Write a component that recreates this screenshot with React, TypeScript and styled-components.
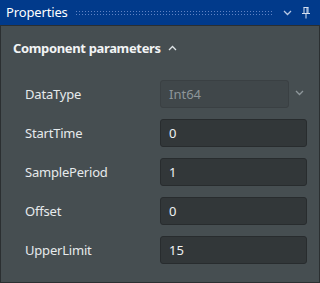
import React from "react";
import styled, { createGlobalStyle } from "styled-components";

const Global = createGlobalStyle`
  html, body { margin: 0; padding: 0; background: #464e51; }
  body { font-family: "Noto Sans", "Open Sans", sans-serif; }
`;

const Window = styled.div`
  width: 320px;
  height: 283px;
  box-sizing: border-box;
  border: 1px solid #2b2f31;
  border-top: none;
  background: #464e51;
  display: flex;
  flex-direction: column;
`;

const TitleBar = styled.div`
  height: 25px;
  background: #013a8b;
  border-bottom: 1px solid #2b2f31;
  display: flex;
  align-items: center;
  padding: 0 8px 0 6px;
  gap: 7px;
  margin: 0 -1px;
`;

const Title = styled.span`
  color: #ffffff;
  font-size: 13px;
  line-height: 1;
  letter-spacing: -0.15px;
`;

const Dots = styled.div`
  flex: 1;
  height: 5px;
  margin: 0 2px 0 0;
  background-image: radial-gradient(circle, #5f82c4 0.7px, transparent 0.8px);
  background-size: 3px 3px;
`;

const IconBtn = styled.span`
  display: flex;
  align-items: center;
  justify-content: center;
  width: 12px;
  height: 16px;
`;

const Body = styled.div`
  padding: 12px 12px 0 12px;
  display: flex;
  flex-direction: column;
`;

const SectionHeader = styled.div`
  display: flex;
  align-items: center;
  gap: 7px;
  color: #f2f4f5;
  font-size: 13px;
  font-weight: 700;
  letter-spacing: -0.35px;
  height: 20px;
`;

const Rows = styled.div`
  display: flex;
  flex-direction: column;
  gap: 11px;
  margin-top: 22px;
  padding-left: 12px;
`;

const Row = styled.div`
  display: grid;
  grid-template-columns: 135px 147px;
  align-items: center;
  height: 28px;
`;

const Label = styled.span`
  color: #e6eaec;
  font-size: 13px;
  letter-spacing: -0.2px;
`;

const Field = styled.div<{ $disabled?: boolean }>`
  position: relative;
  box-sizing: border-box;
  height: 28px;
  width: ${(p) => (p.$disabled ? "129px" : "147px")};
  border-radius: 3px;
  background: ${(p) => (p.$disabled ? "#40474a" : "#323739")};
  border: 1px solid ${(p) => (p.$disabled ? "#3a4043" : "#282c2e")};
  color: ${(p) => (p.$disabled ? "#8d9599" : "#eef1f2")};
  font-size: 13px;
  display: flex;
  align-items: center;
  padding-left: 8px;
`;

const Caret = styled.span`
  position: absolute;
  left: 134px;
  top: 9px;
  display: flex;
`;

const Chevron = ({ up, color = "#c9d0d3" }: { up?: boolean; color?: string }) => (
  <svg width="9" height="6" viewBox="0 0 9 6">
    <path
      d={up ? "M1 5 L4.5 1.5 L8 5" : "M1 1 L4.5 4.5 L8 1"}
      stroke={color}
      strokeWidth="1.3"
      fill="none"
    />
  </svg>
);

const Pin = () => (
  <svg width="10" height="12" viewBox="0 0 10 12">
    <path d="M2.5 0.5 H7.5 M3 0.5 V6.5 M7 0.5 V6.5 M6 0.5 V6.5 M1 6.5 H9 M5 6.5 V11.5" stroke="#d6e0f0" strokeWidth="1" fill="none" />
  </svg>
);

const rows = [
  { label: "StartTime", value: "0" },
  { label: "SamplePeriod", value: "1" },
  { label: "Offset", value: "0" },
  { label: "UpperLimit", value: "15" },
];

export default function App() {
  return (
    <>
      <Global />
      <Window>
        <TitleBar>
          <Title>Properties</Title>
          <Dots />
          <IconBtn>
            <Chevron color="#b8c8e4" />
          </IconBtn>
          <IconBtn>
            <Pin />
          </IconBtn>
        </TitleBar>
        <Body>
          <SectionHeader>
            Component parameters
            <Chevron up color="#e0e5e8" />
          </SectionHeader>
          <Rows>
            <Row>
              <Label>DataType</Label>
              <Field $disabled>
                Int64
                <Caret>
                  <Chevron color="#8e979b" />
                </Caret>
              </Field>
            </Row>
            {rows.map((r) => (
              <Row key={r.label}>
                <Label>{r.label}</Label>
                <Field>{r.value}</Field>
              </Row>
            ))}
          </Rows>
        </Body>
      </Window>
    </>
  );
}
